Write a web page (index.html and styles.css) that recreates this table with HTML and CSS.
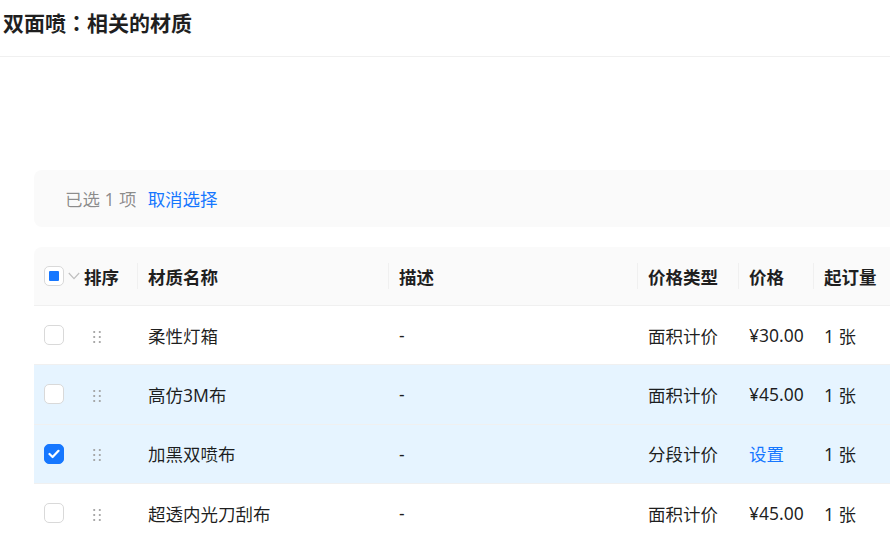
FILE: index.html
```html
<!DOCTYPE html>
<html lang="zh-CN">
<head>
<meta charset="utf-8">
<title>双面喷：相关的材质</title>
<link rel="stylesheet" href="styles.css">
</head>
<body>
<header class="page-head">
  <h1 class="page-title">双面喷<span class="colon" lang="ja">：</span>相关的材质</h1>
</header>
<main class="content">
  <div class="alert">
    <span class="alert-count">已选 1 项</span>
    <a class="link alert-clear">取消选择</a>
  </div>
  <div class="table-wrap">
    <table class="table">
      <colgroup>
        <col class="c-sel"><col class="c-name"><col class="c-desc"><col class="c-type"><col class="c-price"><col class="c-qty">
      </colgroup>
      <thead>
        <tr>
          <th class="th-sel">
            <div class="sel-cell">
              <span class="checkbox indeterminate"></span>
              <svg class="chevron" width="12" height="8" viewBox="0 0 12 8"><path d="M0.8 1 L6 6.6 L11.2 1" fill="none" stroke="#bfbfbf" stroke-width="1.2"/></svg>
              <span class="sort-label">排序</span>
            </div>
          </th>
          <th class="div">材质名称</th>
          <th class="div">描述</th>
          <th class="div">价格类型</th>
          <th class="div">价格</th>
          <th class="div">起订量</th>
        </tr>
      </thead>
      <tbody>
        <tr>
          <td><div class="sel-cell"><span class="checkbox"></span><svg class="handle" width="8" height="14" viewBox="0 0 8 14"><g fill="#9e9e9e"><circle cx="1.2" cy="2" r="1.1"/><circle cx="6.8" cy="2" r="1.1"/><circle cx="1.2" cy="7" r="1.1"/><circle cx="6.8" cy="7" r="1.1"/><circle cx="1.2" cy="12" r="1.1"/><circle cx="6.8" cy="12" r="1.1"/></g></svg></div></td>
          <td>柔性灯箱</td><td>-</td><td>面积计价</td><td>¥30.00</td><td>1 张</td>
        </tr>
        <tr class="hl">
          <td><div class="sel-cell"><span class="checkbox"></span><svg class="handle" width="8" height="14" viewBox="0 0 8 14"><g fill="#9e9e9e"><circle cx="1.2" cy="2" r="1.1"/><circle cx="6.8" cy="2" r="1.1"/><circle cx="1.2" cy="7" r="1.1"/><circle cx="6.8" cy="7" r="1.1"/><circle cx="1.2" cy="12" r="1.1"/><circle cx="6.8" cy="12" r="1.1"/></g></svg></div></td>
          <td>高仿3M布</td><td>-</td><td>面积计价</td><td>¥45.00</td><td>1 张</td>
        </tr>
        <tr class="hl">
          <td><div class="sel-cell"><span class="checkbox checked"><svg width="12" height="10" viewBox="0 0 12 10"><path d="M1.5 5 L4.6 8 L10.5 1.8" fill="none" stroke="#fff" stroke-width="2.2" stroke-linecap="round" stroke-linejoin="round"/></svg></span><svg class="handle" width="8" height="14" viewBox="0 0 8 14"><g fill="#9e9e9e"><circle cx="1.2" cy="2" r="1.1"/><circle cx="6.8" cy="2" r="1.1"/><circle cx="1.2" cy="7" r="1.1"/><circle cx="6.8" cy="7" r="1.1"/><circle cx="1.2" cy="12" r="1.1"/><circle cx="6.8" cy="12" r="1.1"/></g></svg></div></td>
          <td>加黑双喷布</td><td>-</td><td>分段计价</td><td><a class="link">设置</a></td><td>1 张</td>
        </tr>
        <tr>
          <td><div class="sel-cell"><span class="checkbox"></span><svg class="handle" width="8" height="14" viewBox="0 0 8 14"><g fill="#9e9e9e"><circle cx="1.2" cy="2" r="1.1"/><circle cx="6.8" cy="2" r="1.1"/><circle cx="1.2" cy="7" r="1.1"/><circle cx="6.8" cy="7" r="1.1"/><circle cx="1.2" cy="12" r="1.1"/><circle cx="6.8" cy="12" r="1.1"/></g></svg></div></td>
          <td>超透内光刀刮布</td><td>-</td><td>面积计价</td><td>¥45.00</td><td>1 张</td>
        </tr>
      </tbody>
    </table>
  </div>
</main>
</body>
</html>
```

FILE: styles.css
```css
* { box-sizing: border-box; }
html, body {
  margin: 0;
  padding: 0;
  background: #fff;
  width: 890px;
  height: 535px;
  overflow: hidden;
  font-family: "Noto Sans", "Noto Sans CJK SC", sans-serif;
  color: rgba(0, 0, 0, 0.88);
}
.page-head {
  height: 57px;
  border-bottom: 1px solid #f0f0f0;
  padding: 7px 0 0 3px;
}
.page-title {
  margin: 0;
  font-size: 21px;
  line-height: 30px;
  font-weight: 700;
  font-family: "Noto Sans CJK SC", sans-serif;
  color: #1f1f1f;
}
.colon { font-family: "Noto Sans CJK JP", "Noto Sans CJK SC", sans-serif; }
.content {
  padding: 113px 0 0 34px;
}
.alert {
  height: 57px;
  background: #fafafa;
  border-radius: 8px 0 0 8px;
  display: flex;
  align-items: center;
  padding-left: 31px;
  font-size: 17.5px;
  margin-bottom: 20px;
}
.alert-count { color: rgba(0, 0, 0, 0.45); }
.alert-clear { margin-left: 11px; }
.link { color: #1677ff; text-decoration: none; cursor: pointer; }
.table-wrap { overflow: hidden; }
.table {
  border-collapse: separate;
  border-spacing: 0;
  table-layout: fixed;
  width: 920px;
  font-size: 17.5px;
}
.c-sel { width: 103px; }
.c-name { width: 251px; }
.c-desc { width: 249px; }
.c-type { width: 101px; }
.c-price { width: 75px; }
.c-qty { width: 141px; }
th, td {
  text-align: left;
  padding: 0 0 0 11px;
  border-bottom: 1px solid #f0f0f0;
  white-space: nowrap;
}
th {
  height: 59px;
  background: #fafafa;
  font-weight: 700;
  font-family: "Noto Sans CJK SC", sans-serif;
  color: #1f1f1f;
  position: relative;
}
thead tr th:first-child { border-top-left-radius: 8px; }
th.div::before {
  content: "";
  position: absolute;
  left: 0;
  top: 50%;
  width: 1px;
  height: 26px;
  transform: translateY(-50%);
  background: #f0f0f0;
}
td { height: 59.3px; }
tr.hl td { background: #e6f4ff; }
.th-sel, td:first-child { padding-left: 10px; }
.sel-cell {
  display: flex;
  align-items: center;
}
.checkbox {
  width: 20px;
  height: 20px;
  border: 1px solid #d9d9d9;
  border-radius: 5px;
  background: #fff;
  display: inline-flex;
  align-items: center;
  justify-content: center;
  flex: none;
}
.checkbox.indeterminate::after {
  content: "";
  width: 10px;
  height: 10px;
  background: #1677ff;
  border-radius: 1px;
}
.checkbox.checked {
  background: #1677ff;
  border-color: #1677ff;
}
.chevron { margin-left: 4px; flex: none; }
.sort-label { margin-left: 4px; }
.handle {
  margin-left: 29px;
  flex: none;
  margin-top: 3px;
}
```
